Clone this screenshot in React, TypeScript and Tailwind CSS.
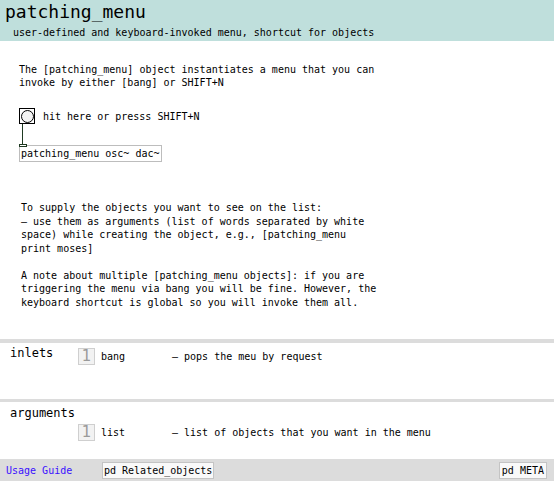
const mono = "font-['DejaVu_Sans_Mono',monospace]";

function Bang() {
  return (
    <div className="w-[16px] h-[16px] border border-black bg-white flex items-center justify-center">
      <div className="w-[13px] h-[13px] rounded-full border border-black bg-[#f4f4f4]" />
    </div>
  );
}

function NumBox({ n }: { n: string }) {
  return (
    <div className="w-[17px] h-[17px] border border-[#cfcfcf] bg-[#f2f2f2] flex items-center justify-center text-[15px] leading-none text-[#9a9a9a] font-['DejaVu_Sans',sans-serif]">
      {n}
    </div>
  );
}

function DocRow({ label, desc }: { label: string; desc: string }) {
  return (
    <div className="flex items-center h-[17px]">
      <div className="w-[78px]" />
      <NumBox n="1" />
      <div className="w-[77px] pl-[6px] whitespace-pre">{label}</div>
      <div className="whitespace-pre">{desc}</div>
    </div>
  );
}

export default function App() {
  const block2 = [
    'To supply the objects you want to see on the list:',
    '– use them as arguments (list of words separated by white',
    'space) while creating the object, e.g., [patching_menu',
    'print moses]',
    ' ',
    'A note about multiple [patching_menu objects]: if you are',
    'triggering the menu via bang you will be fine. However, the',
    'keyboard shortcut is global so you will invoke them all.',
  ];

  return (
    <div className={`w-[554px] h-[485px] bg-white text-black text-[10px] leading-[13px] ${mono} overflow-hidden`}>
      {/* header */}
      <div className="h-[41px] bg-[#bfdfdc]">
        <div className="pl-[5px] pt-[3px] text-[18px] leading-[18px]">patching_menu</div>
        <div className="pl-[13px] mt-[5px] whitespace-pre">user-defined and keyboard-invoked menu, shortcut for objects</div>
      </div>

      {/* patch body */}
      <div className="h-[298px] pl-[19px]">
        <div className="pt-[22px] whitespace-pre">
          <div>The [patching_menu] object instantiates a menu that you can</div>
          <div>invoke by either [bang] or SHIFT+N</div>
        </div>

        <div className="mt-[19px] flex items-center gap-[8px]">
          <Bang />
          <span className="whitespace-pre">hit here or presss SHIFT+N</span>
        </div>
        <div className="ml-[3px] w-px h-[21px] bg-[#1f3a22]" />
        <div className="relative w-[143px] h-[17px] border border-[#bdbdbd] flex items-center pl-[1px] whitespace-pre">
          <div className="absolute -top-[2px] -left-px w-[8px] h-[3px] border border-[#1f3a22] bg-white" />
          patching_menu osc~ dac~
        </div>

        <div className="mt-[39px] pl-[2px] leading-[13.5px]">
          {block2.map((l, i) => (
            <div key={i} className="whitespace-pre h-[13.5px]">{l}</div>
          ))}
        </div>
      </div>

      <div className="h-[4px] bg-[#dcdcdc]" />

      {/* inlets */}
      <div className="h-[56px]">
        <div className="pl-[10px] pt-[3px] text-[12px] leading-[14px]">inlets</div>
        <div className="-mt-[12px]">
          <DocRow label="bang" desc="– pops the meu by request" />
        </div>
      </div>

      <div className="h-[3px] bg-[#dcdcdc]" />

      {/* arguments */}
      <div className="h-[57px]">
        <div className="pl-[10px] pt-[4px] text-[12px] leading-[14px]">arguments</div>
        <div className="mt-[4px]">
          <DocRow label="list" desc="– list of objects that you want in the menu" />
        </div>
      </div>

      {/* footer */}
      <div className="h-[22px] bg-[#dcdcdc] flex items-center pl-[6px] pr-[7px]">
        <span className="text-[#3a10ff] w-[96px] whitespace-pre">Usage Guide</span>
        <div className="h-[17px] border border-[#c4c4c4] bg-[#f9f9f9] flex items-center px-[1px] whitespace-pre">pd Related_objects</div>
        <div className="flex-1" />
        <div className="h-[17px] border border-[#c4c4c4] bg-[#f9f9f9] flex items-center px-[2px] whitespace-pre">pd META</div>
      </div>
    </div>
  );
}
